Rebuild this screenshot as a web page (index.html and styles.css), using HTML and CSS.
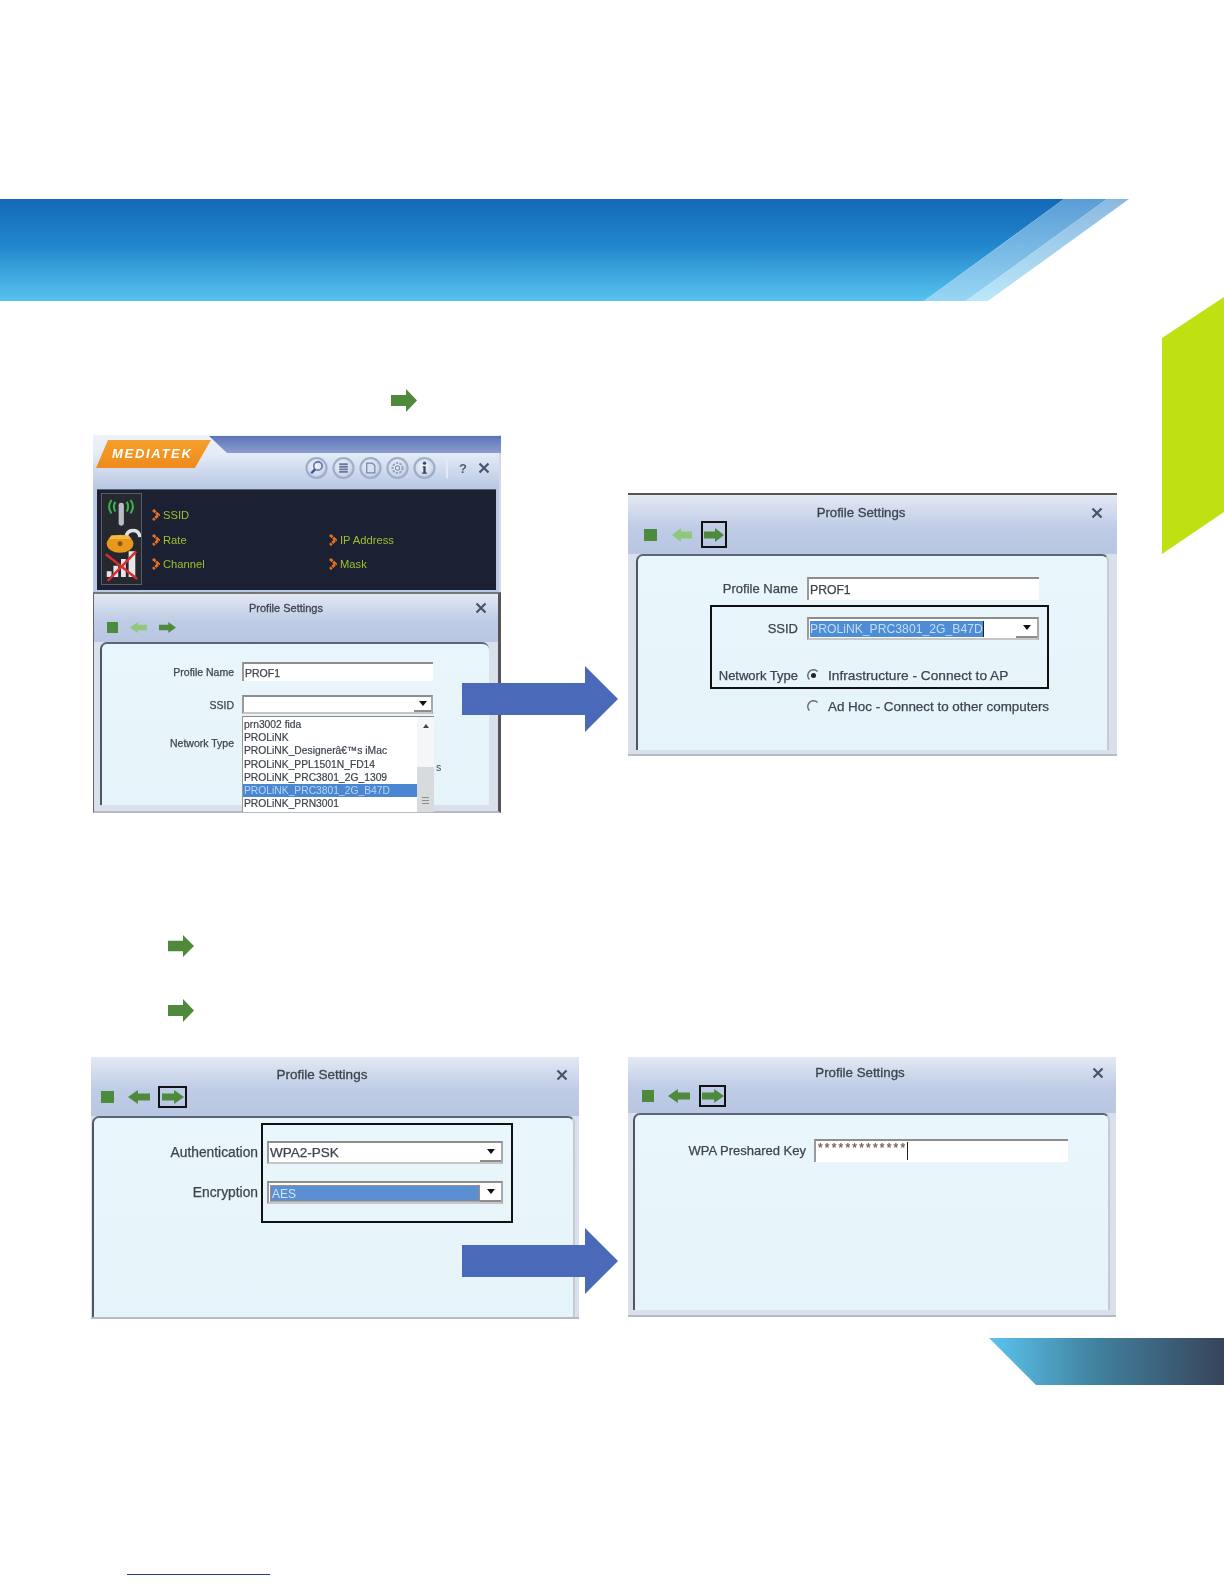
FILE: index.html
```html
<!DOCTYPE html>
<html lang="en">
<head>
<meta charset="utf-8">
<title>Profile Settings</title>
<link rel="stylesheet" href="styles.css">
</head>
<body>
<svg class="defs" aria-hidden="true">
  <defs>
    <linearGradient id="gBan1" x1="0" y1="0" x2="0" y2="1"><stop offset="0" stop-color="#1568b7"/><stop offset=".45" stop-color="#2186cb"/><stop offset="1" stop-color="#57c3ef"/></linearGradient>
    <linearGradient id="gBan2" x1="0" y1="0" x2="0" y2="1"><stop offset="0" stop-color="#5a9dd6"/><stop offset="1" stop-color="#97d6f3"/></linearGradient>
    <linearGradient id="gBan3" x1="0" y1="0" x2="0" y2="1"><stop offset="0" stop-color="#8bb8e0"/><stop offset="1" stop-color="#bce8f9"/></linearGradient>
    <linearGradient id="gBand" x1="0" y1="0" x2="1" y2="0"><stop offset="0" stop-color="#5bc4ee"/><stop offset=".45" stop-color="#41829f"/><stop offset="1" stop-color="#37445a"/></linearGradient>
    <radialGradient id="gBtn" cx=".45" cy=".4" r=".65"><stop offset="0" stop-color="#f3f5fa"/><stop offset=".7" stop-color="#cfd8ea"/><stop offset="1" stop-color="#a5b1cd"/></radialGradient>
    <symbol id="arrow-r" viewBox="0 0 26 23" preserveAspectRatio="none"><polygon points="0,6 15,6 15,0 26,11.5 15,23 15,17 0,17"/></symbol>
    <symbol id="tb-r" viewBox="0 0 20 14" preserveAspectRatio="none"><polygon points="0,3.5 11,3.5 11,0 20,7 11,14 11,10.500 0,10.500"/></symbol>
    <symbol id="tb-l" viewBox="0 0 20 14" preserveAspectRatio="none"><polygon points="20,3.5 9,3.5 9,0 0,7 9,14 9,10.500 20,10.500"/></symbol>
    <symbol id="close" viewBox="0 0 12 12"><path d="M1.5 1.5 10.5 10.5M10.5 1.5 1.5 10.5" fill="none" stroke="#46536f" stroke-width="2.2"/></symbol>
    <symbol id="chev" viewBox="0 0 8 12"><path d="M1 1 6.5 6 1 11" fill="none" stroke="#e8711f" stroke-width="2.8" stroke-dasharray="3.400 .8"/></symbol>
    <symbol id="radio" viewBox="0 0 13 13"><path d="M10.5 2.4A5.4 5.4 0 0 0 2.4 10.5" fill="none" stroke="#666" stroke-width="1.4"/></symbol>
  </defs>
</svg>

<main class="page">
  <svg class="banner" viewBox="0 0 1129 102" aria-hidden="true">
    <polygon points="0,0 1064,0 924,102 0,102" fill="url(#gBan1)"/>
    <polygon points="1064,0 1107,0 966,102 924,102" fill="url(#gBan2)"/>
    <polygon points="1107,0 1129,0 988,102 966,102" fill="url(#gBan3)"/>
  </svg>
  <svg class="side-tab" viewBox="0 0 62 257" aria-hidden="true"><polygon points="0,41 62,0 62,215 0,257"/></svg>

  <svg class="step-arrow step-a"><use href="#arrow-r"/></svg>

  <section class="row row-top">
    <div class="win win-a">
      <div class="mtk">
        <div class="mtk-strip"></div>
        <div class="mtk-top">
          <div class="logo">MEDIATEK</div>
          <div class="tools">
            <svg class="rbtn" viewBox="0 0 24 24"><circle cx="12" cy="12" r="10.5"/><circle cx="13.5" cy="10" r="4.4" fill="none" stroke="#5e70a8" stroke-width="1.6"/><path d="M10.5 13.5 6.5 17.5" stroke="#3d5090" stroke-width="2.4"/></svg>
            <svg class="rbtn" viewBox="0 0 24 24"><circle cx="12" cy="12" r="10.5"/><path d="M7.5 8h9M7.5 10.7h9M7.5 13.4h9M7.5 16h9" stroke="#66759f" stroke-width="1.9"/></svg>
            <svg class="rbtn" viewBox="0 0 24 24"><circle cx="12" cy="12" r="10.5"/><path d="M8 7h6l2.500 2.500V17H8Z" fill="#d8dff0" stroke="#7484ae" stroke-width="1.300"/></svg>
            <svg class="rbtn" viewBox="0 0 24 24"><circle cx="12" cy="12" r="10.5"/><circle cx="12" cy="12" r="5.200" fill="none" stroke="#95a2c2" stroke-width="2.200" stroke-dasharray="2.500 1.200"/><circle cx="12" cy="12" r="2.200" fill="none" stroke="#8593b6" stroke-width="1.200"/></svg>
            <svg class="rbtn" viewBox="0 0 24 24"><circle cx="12" cy="12" r="10.5"/><circle cx="12" cy="7" r="1.700" fill="#33466f"/><path d="M10 10.300h3.200v6.500H14.500v1.200h-5v-1.200h1.300v-5.200H10Z" fill="#33466f"/></svg>
            <span class="tool-sep"></span>
            <span class="tool-help">?</span>
            <svg class="close"><use href="#close"/></svg>
          </div>
        </div>
        <div class="status">
          <div class="status-icons">
            <svg viewBox="0 0 41 92" width="39" height="90" aria-hidden="true">
              <path d="M14 7q-3 5 0 10M10 5q-5 7 0 14M26 7q3 5 0 10M30 5q5 7 0 14" fill="none" stroke="#3fb04e" stroke-width="2.200"/>
              <rect x="17.500" y="8" width="5.500" height="24" rx="2.500" fill="#b9bdc6"/>
              <path d="M25 45q1-8 7.500-8t7.500 7" fill="none" stroke="#dfe2e8" stroke-width="3.600"/>
              <ellipse cx="19" cy="51" rx="14" ry="9.500" fill="#e9981d"/>
              <path d="M7 46h24l-3-4H10Z" fill="#f6bb42"/>
              <circle cx="19" cy="51" r="2.600" fill="#8a5312"/>
              <path d="M5 86h5v-6H5ZM12 86h5V74h-5ZM20 86h5V67h-5ZM28 86h7V59h-7Z" fill="#e6e6e8"/>
              <path d="M4 62 37 88M36 59 6 90" stroke="#d92c2c" stroke-width="2.600"/>
            </svg>
          </div>
          <div class="status-grid">
            <div class="stat"><svg class="chev"><use href="#chev"/></svg>SSID</div><div></div>
            <div class="stat"><svg class="chev"><use href="#chev"/></svg>Rate</div>
            <div class="stat"><svg class="chev"><use href="#chev"/></svg>IP Address</div>
            <div class="stat"><svg class="chev"><use href="#chev"/></svg>Channel</div>
            <div class="stat"><svg class="chev"><use href="#chev"/></svg>Mask</div>
          </div>
        </div>
      </div>
      <div class="head">
        <div class="title-row"><span></span><span class="title">Profile Settings</span><svg class="close"><use href="#close"/></svg></div>
        <div class="toolbar">
          <span class="stop"></span>
          <svg class="tb-arrow faded"><use href="#tb-l"/></svg>
          <svg class="tb-arrow"><use href="#tb-r"/></svg>
        </div>
      </div>
      <div class="body">
        <div class="panel">
          <div class="form">
            <div class="frow"><span class="label">Profile Name</span><div class="field">PROF1</div></div>
            <div class="frow">
              <span class="label">SSID</span>
              <div class="field select">
                <span class="value"></span><span class="drop"></span>
                <div class="menu">
                  <ul class="menu-list">
                    <li>prn3002 fida</li>
                    <li>PROLiNK</li>
                    <li>PROLiNK_Designerâ€™s iMac</li>
                    <li>PROLiNK_PPL1501N_FD14</li>
                    <li>PROLiNK_PRC3801_2G_1309</li>
                    <li class="on">PROLiNK_PRC3801_2G_B47D</li>
                    <li>PROLiNK_PRN3001</li>
                  </ul>
                  <div class="menu-scroll"><span class="up"></span><span class="thumb"></span></div>
                </div>
              </div>
            </div>
            <div class="frow"><span class="label">Network Type</span></div>
            <div class="frow"><span class="label"></span><span class="field-plain"></span><span class="behind">s</span></div>
          </div>
        </div>
      </div>
    </div>

    <div class="win win-b">
      <div class="head">
        <div class="title-row"><span></span><span class="title">Profile Settings</span><svg class="close"><use href="#close"/></svg></div>
        <div class="toolbar">
          <span class="stop"></span>
          <svg class="tb-arrow faded"><use href="#tb-l"/></svg>
          <span class="tb-box"><svg class="tb-arrow"><use href="#tb-r"/></svg></span>
        </div>
      </div>
      <div class="body">
        <div class="panel">
          <div class="hl"></div>
          <div class="form">
            <div class="frow"><span class="label">Profile Name</span><div class="field">PROF1</div></div>
            <div class="frow"><span class="label">SSID</span><div class="field select"><span class="value"><span class="sel-text">PROLiNK_PRC3801_2G_B47D</span></span><span class="drop"></span></div></div>
            <div class="frow"><span class="label">Network Type</span><div class="opt"><svg class="radio"><use href="#radio"/></svg><span class="dot"></span>Infrastructure - Connect to AP</div></div>
            <div class="frow"><span class="label"></span><div class="opt"><svg class="radio"><use href="#radio"/></svg>Ad Hoc - Connect to other computers</div></div>
          </div>
        </div>
      </div>
    </div>

    <svg class="big-arrow big-a" viewBox="0 0 156 66" aria-hidden="true"><polygon points="0,17 123,17 123,0 156,33 123,66 123,49 0,49"/></svg>
  </section>

  <svg class="step-arrow step-b"><use href="#arrow-r"/></svg>
  <svg class="step-arrow step-c"><use href="#arrow-r"/></svg>

  <section class="row row-bottom">
    <div class="win win-c">
      <div class="head">
        <div class="title-row"><span></span><span class="title">Profile Settings</span><svg class="close"><use href="#close"/></svg></div>
        <div class="toolbar">
          <span class="stop"></span>
          <svg class="tb-arrow"><use href="#tb-l"/></svg>
          <span class="tb-box"><svg class="tb-arrow"><use href="#tb-r"/></svg></span>
        </div>
      </div>
      <div class="body">
        <div class="panel">
          <div class="hl"></div>
          <div class="form">
            <div class="frow"><span class="label">Authentication</span><div class="field select"><span class="value">WPA2-PSK</span><span class="drop"></span></div></div>
            <div class="frow"><span class="label">Encryption</span><div class="field select"><span class="value value-on">AES</span><span class="drop"></span></div></div>
          </div>
        </div>
      </div>
    </div>

    <div class="win win-d">
      <div class="head">
        <div class="title-row"><span></span><span class="title">Profile Settings</span><svg class="close"><use href="#close"/></svg></div>
        <div class="toolbar">
          <span class="stop"></span>
          <svg class="tb-arrow"><use href="#tb-l"/></svg>
          <span class="tb-box"><svg class="tb-arrow"><use href="#tb-r"/></svg></span>
        </div>
      </div>
      <div class="body">
        <div class="panel">
          <div class="form">
            <div class="frow"><span class="label">WPA Preshared Key</span><div class="field"><span class="secret">*************</span></div></div>
          </div>
        </div>
      </div>
    </div>

    <svg class="big-arrow big-b" viewBox="0 0 156 66" aria-hidden="true"><polygon points="0,17 123,17 123,0 156,33 123,66 123,49 0,49"/></svg>
  </section>

  <svg class="band" viewBox="0 0 235 47" aria-hidden="true"><polygon points="0,0 235,0 235,47 47,47" fill="url(#gBand)"/></svg>
  <div class="foot-rule"></div>
</main>
</body>
</html>
```

FILE: styles.css
```css
* { box-sizing: border-box; }
html, body { margin: 0; padding: 0; background: #fff; }
.defs { position: absolute; width: 0; height: 0; overflow: hidden; }

.page {
  position: relative;
  width: 1224px;
  height: 1584px;
  overflow: hidden;
  display: flex;
  flex-direction: column;
  font-family: "Liberation Sans", Arial, sans-serif;
  color: #3e444e;
}

.banner { display: block; flex: none; width: 1129px; height: 102px; margin-top: 199px; }
.side-tab { position: absolute; right: 0; top: 297px; width: 62px; height: 257px; fill: #bfe011; }

.step-arrow { display: block; flex: none; width: 26px; height: 23px; fill: #4f8a3c; }
.step-a { margin: 88px 0 0 391px; }
.step-b { margin: 122px 0 0 168px; height: 22px; }
.step-c { margin: 42px 0 0 168px; }

.row { position: relative; display: flex; flex: none; align-items: flex-start; }
.row-top { margin-top: 23px; padding-left: 93px; gap: 127px; }
.row-bottom { margin-top: 35px; padding-left: 91px; gap: 49px; }

.big-arrow { position: absolute; left: 462px; width: 156px; height: 66px; fill: #4b69b9; z-index: 3; }
.big-a { top: 231px; }
.big-b { top: 171px; }

.band { display: block; flex: none; align-self: flex-end; width: 235px; height: 47px; margin-top: 19px; }
.foot-rule { flex: none; width: 143px; height: 1px; margin: 189px 0 0 127px; background: #27388d; }

/* application windows */
.win {
  display: flex;
  flex-direction: column;
  flex: none;
  position: relative;
  filter: blur(.6px);
  background: #d9e0eb;
}
.win-a { width: 408px; height: 378px; }
.win-b { width: 489px; height: 263px; margin-top: 58px; border-top: 2px solid #555; }
.win-c { width: 488px; height: 262px; }
.win-d { width: 488px; height: 260px; }

.head {
  flex: none;
  background: linear-gradient(#e3e9f4, #bfcce6 55%, #b8c6e2);
}
.title-row { display: grid; grid-template-columns: 1fr auto 1fr; align-items: center; }
.title { line-height: 16px; white-space: nowrap; -webkit-text-stroke: .3px currentColor; }
.title-row .close { justify-self: end; }
.close { display: block; flex: none; width: 12px; height: 12px; }

.toolbar { display: flex; align-items: center; }
.stop { display: block; flex: none; background: #4c8b3d; }
.tb-arrow { display: block; flex: none; fill: #4f8a3c; }
.tb-arrow.faded { fill: #8fc87a; }
.tb-box { display: flex; align-items: center; justify-content: center; flex: none; border: 2px solid #111; }

.body { flex: 1; display: flex; min-height: 0; border-bottom: 2px solid #b5bbc4; }
.panel {
  flex: 1;
  position: relative;
  background: linear-gradient(#e9f6fb, #e5f4fa);
  border-top: 2px solid #5a6578;
  border-left: 2px solid #4f5763;
  border-right: 2px solid #c5cad3;
  border-radius: 7px 7px 0 0;
}
.hl { position: absolute; border: 2px solid #111; z-index: 1; pointer-events: none; }

.form { display: flex; flex-direction: column; }
.frow { display: flex; align-items: center; flex: none; }
.label { flex: none; text-align: right; white-space: nowrap; -webkit-text-stroke: .25px currentColor; }
.field {
  position: relative;
  flex: none;
  display: flex;
  align-items: center;
  height: 100%;
  background: #fff;
  border-top: 2px solid #8d8d8d;
  border-left: 2px solid #9a9a9a;
  padding-left: 1px;
  white-space: nowrap;
  -webkit-text-stroke: .25px currentColor;
}
.select { border-right: 2px solid #a8a8a8; border-bottom: 2px solid #c6c6c6; padding-left: 0; }
.value { flex: 1; display: flex; align-items: center; height: 100%; padding-left: 1px; min-width: 0; }
.value-on {
  background: #5b8fd1;
  color: #cfe4f8;
  border: 1px solid #a68c7c;
  border-bottom-color: #c9a58a;
  -webkit-text-stroke: 0;
}
.sel-text { background: #4d8dd6; color: #c4ddf5; line-height: 16px; border-right: 1px solid #222; -webkit-text-stroke: 0; }
.drop { display: flex; align-items: center; justify-content: center; flex: none; width: 21px; height: 100%; border-bottom: 2px solid #8d8d8d; background: #fff; }
.drop::after { content: ""; border-style: solid; border-width: 5px 4px 0; border-color: #111 transparent transparent; }
.secret { letter-spacing: 2.2px; font-size: 12px; line-height: 12px; height: 18px; border-right: 1px solid #222; color: #6c564b; margin: -2px 0 0 1px; }

.opt { display: flex; align-items: center; position: relative; white-space: nowrap; -webkit-text-stroke: .25px currentColor; }
.radio { display: block; flex: none; width: 13px; height: 13px; margin-right: 8px; }
.dot { position: absolute; left: 4px; top: 50%; width: 5px; height: 5px; margin-top: -2.5px; border-radius: 50%; background: #222; }

/* MEDIATEK header */
.mtk { flex: none; height: 157px; position: relative; background: linear-gradient(#eef3fa 0, #e4ebf6 12%, #b9c8e4 34%, #b9c8e4 100%); display: flex; flex-direction: column; border-right: 2px solid #d3dae6; }
.mtk-strip {
  position: absolute;
  left: 116px;
  right: -2px;
  top: 1px;
  height: 17px;
  background: linear-gradient(#5d73b8, #8a9ed0);
  clip-path: polygon(0 0, 100% 0, 100% 100%, 18px 100%);
}
.mtk-top { flex: none; height: 54px; position: relative; display: flex; align-items: flex-start; }
.logo {
  flex: none;
  width: 115px;
  height: 28px;
  margin: 5px 0 0 3px;
  padding-left: 16px;
  background: linear-gradient(#f5a02c, #ee8a1b);
  clip-path: polygon(10.4% 0, 100% 0, 86% 100%, 0 100%);
  color: #fff;
  font: italic 700 13px/28px "Liberation Sans", Arial, sans-serif;
  letter-spacing: 1.7px;
}
.tools { display: flex; align-items: center; gap: 4px; margin: 21px 0 0 94px; height: 24px; }
.rbtn { display: block; flex: none; width: 23px; height: 24px; }
.rbtn circle:first-child { fill: url(#gBtn); stroke: #a1adc8; stroke-width: 2.2; }
.tool-sep { width: 2px; height: 20px; margin: 0 0 0 6px; background: #e4e9f3; }
.tool-help { font-size: 13px; font-weight: 700; color: #56607a; margin: 0 7px 0 7px; }
.tools .close { margin-left: 0; }

.status {
  flex: 1;
  margin: 0 3px 2px 4px;
  background: #1c2033;
  border-top: 1px solid #555d70;
  padding: 3px 0 0 4px;
  display: flex;
  align-items: flex-start;
  gap: 10px;
}
.status-icons { flex: none; width: 41px; height: 92px; border: 1px solid #5a5e68; background: #26282f; }
.status-icons svg { display: block; }
.status-grid { display: grid; grid-template-columns: 177px auto; grid-auto-rows: 24.5px; padding-top: 10px; }
.stat { display: flex; align-items: center; gap: 3px; font-size: 11.2px; color: #9cc02b; white-space: nowrap; }
.chev { display: block; flex: none; width: 8px; height: 12px; }

/* window A sizes */
.win-a .head { height: 50px; border-top: 2px solid #777; border-left: 1px solid #666; border-right: 3px solid #555; }
.win-a .title { font-size: 11px; margin-right: 9px; }
.win-a .title-row { height: 28px; padding: 0 11px 0 0; }
.win-a .toolbar { padding-left: 13px; gap: 12px; }
.win-a .stop { width: 11px; height: 11px; }
.win-a .tb-arrow { width: 17px; height: 11px; }
.win-a .body { padding: 0 9px 6px 6px; border-left: 1px solid #666; border-right: 3px solid #555; }
.win-a .panel { border-right: 0; }
.win-a .form { padding-top: 18px; font-size: 10.5px; }
.win-a .frow { height: 19px; gap: 8px; }
.win-a .label { width: 132px; }
.win-a .field { width: 191px; }
.win-a .frow:nth-child(2) { margin-top: 14px; }
.win-a .frow:nth-child(3) { margin-top: 14px; height: 30px; }
.win-a .frow:nth-child(4) { margin-top: 3px; height: 12px; }
.win-a .drop { width: 17px; }
.field-plain { flex: none; width: 191px; }
.behind { flex: none; margin-left: -5px; }

.menu {
  position: absolute;
  left: -2px;
  top: 19px;
  width: 192px;
  height: 96px;
  display: flex;
  background: #fff;
  border-top: 1px solid #888;
  border-left: 1px solid #999;
  z-index: 2;
  font-size: 10.3px;
  -webkit-text-stroke: .2px currentColor;
}
.menu-list { flex: 1; margin: 0; padding: 1px 0 0; list-style: none; min-width: 0; }
.menu-list li { height: 13.2px; line-height: 13.2px; padding-left: 1px; }
.menu-list .on { background: #4a86d2; color: #b9d6f2; -webkit-text-stroke: 0; }
.menu-scroll { position: relative; flex: none; width: 17px; display: flex; flex-direction: column; align-items: center; background: #f4f6f7; }
.menu-scroll .up { margin-top: 7px; border-style: solid; border-width: 0 3.5px 4px; border-color: transparent transparent #444; }
.menu-scroll .thumb { margin-top: auto; width: 100%; height: 45px; background: repeating-linear-gradient(#8c8c8c 0 1px, #d8dbde 1px 3px) center 30px / 7px 7px no-repeat, #d8dbde; }

/* window B sizes */
.win-b .head { height: 59px; }
.win-b .title { font-size: 13.2px; margin-right: 9px; }
.win-b .title-row { height: 26px; padding: 9px 14px 0 0; }
.win-b .toolbar { padding-left: 16px; gap: 15px; }
.win-b .toolbar > :last-child { margin-left: -6px; }
.win-b .stop { width: 13px; height: 12px; }
.win-b .tb-arrow { width: 20px; height: 14px; }
.win-b .tb-box { width: 26px; height: 27px; }
.win-b .body { padding: 0 8px 4px 8px; }
.win-b .hl { left: 72px; top: 49px; width: 339px; height: 84px; }
.win-b .form { padding-top: 21px; font-size: 13px; }
.win-b .frow { height: 23px; gap: 9px; }
.win-b .label { width: 160px; }
.win-b .field { width: 232px; font-size: 12.2px; }
.win-b .opt { font-size: 13.4px; }
.win-b .frow:nth-child(2) { margin-top: 17px; }
.win-b .frow:nth-child(3) { margin-top: 24px; }
.win-b .frow:nth-child(3) .opt { font-size: 13.7px; }
.win-b .frow:nth-child(4) { margin-top: 8px; }

/* window C sizes */
.win-c .head { height: 59px; }
.win-c .title { font-size: 13.5px; margin-right: 15px; }
.win-c .title-row { height: 29px; padding: 7px 11px 0 0; }
.win-c .toolbar { padding-left: 10px; gap: 14px; }
.win-c .toolbar > :last-child { margin-left: -6px; }
.win-c .stop { width: 13px; height: 12px; }
.win-c .tb-arrow { width: 22px; height: 14px; }
.win-c .tb-box { width: 29px; height: 22px; }
.win-c .body { padding: 0 4px 0 1px; }
.win-c .hl { left: 167px; top: 5px; width: 252px; height: 100px; }
.win-c .form { padding-top: 23px; font-size: 13.8px; }
.win-c .frow { height: 23px; gap: 9px; }
.win-c .label { width: 164px; }
.win-c .field { width: 236px; font-size: 13.5px; }
.win-c .frow:nth-child(2) { margin-top: 17px; }
.win-c .value-on { margin: 2px 0 0 1px; height: 17px; align-self: flex-start; font-size: 12px; }

/* window D sizes */
.win-d .head { height: 56px; }
.win-d .title { font-size: 13.3px; margin-right: 12px; }
.win-d .title-row { height: 28px; padding: 4px 12px 0 0; }
.win-d .toolbar { padding-left: 14px; gap: 14px; }
.win-d .toolbar > :last-child { margin-left: -5px; }
.win-d .stop { width: 12px; height: 12px; }
.win-d .tb-arrow { width: 22px; height: 14px; }
.win-d .tb-box { width: 27px; height: 22px; }
.win-d .body { padding: 0 6px 5px 5px; }
.win-d .form { padding-top: 24px; font-size: 13px; }
.win-d .frow { height: 23px; gap: 8px; }
.win-d .label { width: 171px; }
.win-d .field { width: 254px; }
```
